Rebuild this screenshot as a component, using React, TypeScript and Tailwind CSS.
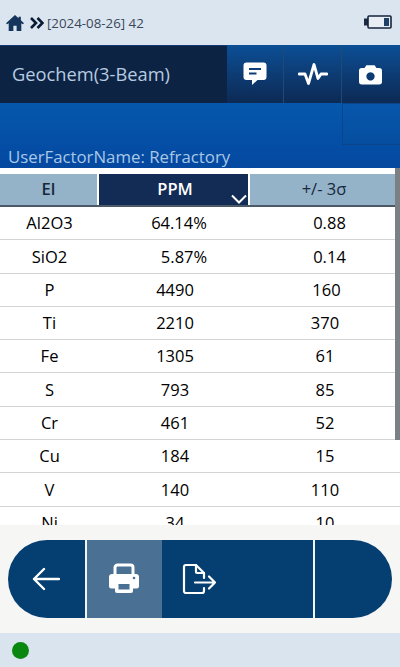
import React from "react";

const rows: [string, string, string, string, string][] = [
  ["Al2O3", "64.14%", "0.88", "pl-[10px]", "pl-[10px]"],
  ["SiO2", "5.87%", "0.14", "pl-[20px]", "pl-[10px]"],
  ["P", "4490", "160", "pl-[2px]", "pl-[4px]"],
  ["Ti", "2210", "370", "pl-[2px]", "pl-[1px]"],
  ["Fe", "1305", "61", "pl-[2px]", "pl-[1px]"],
  ["S", "793", "85", "pl-[2px]", "pl-[1px]"],
  ["Cr", "461", "52", "pl-[2px]", "pl-[1px]"],
  ["Cu", "184", "15", "pl-[2px]", "pl-[1px]"],
  ["V", "140", "110", "pl-[2px]", "pl-[1px]"],
  ["Ni", "34", "10", "pl-[2px]", "pl-[1px]"],
];

export default function App() {
  return (
    <div className="w-[400px] h-[667px] flex flex-col overflow-hidden bg-white text-black font-['Open_Sans','Noto_Sans',sans-serif]">
      {/* top status */}
      <div className="h-[45px] shrink-0 bg-[#dbe5ef] flex items-center pl-[6px] pr-[8px] pt-[1px]">
        <svg width="18" height="18" viewBox="0 0 20 20" className="text-[#14345c]" fill="currentColor">
          <path d="M10 1 0 10.200l1.200 1.300L3 10.300V19h5.200v-6h3.600v6H17V10.300l1.800 1.200 1.200-1.300L16.500 7V3h-2.500v1.800z" />
        </svg>
        <svg width="14" height="12" viewBox="0 0 14 12" fill="none" stroke="#0a1c34" strokeWidth="2.600" className="ml-[6px]">
          <path d="M1 1l5 5-5 5M7.500 1l5 5-5 5" />
        </svg>
        <span className="ml-[3px] text-[13.300px] leading-none text-[#39475a] mt-[1px]">[2024-08-26] 42</span>
        <svg width="28" height="14" viewBox="0 0 28 14" className="ml-auto -mt-[3px]">
          <rect x="0" y="3.500" width="4" height="7" fill="#1a2a40" />
          <rect x="4" y="1" width="23" height="12" rx="1" fill="#e8eef4" stroke="#14243c" strokeWidth="1.600" />
          <rect x="20" y="3" width="5" height="8" fill="#1f3f66" />
        </svg>
      </div>

      {/* title row */}
      <div className="h-[58px] shrink-0 flex">
        <div className="w-[227px] bg-[#0d2344] border-t border-[#123a6e] flex items-center pl-[12px] pb-[1px] text-[18.300px] text-[#b7cce0]">
          Geochem(3-Beam)
        </div>
        <div className="flex-1 flex bg-gradient-to-b from-[#0a4f96] to-[#0c2a54]">
          <div className="w-[57px] border-r border-[#1f4a76] flex items-center justify-center">
            <svg width="24" height="24" viewBox="0 0 24 24" fill="#fff">
              <path fillRule="evenodd" d="M3.500 0.500h17A3 3 0 0 1 23.500 3.500v11.500a3 3 0 0 1-3 3H14.500l-5.500 5v-5H3.500a3 3 0 0 1-3-3V3.500a3 3 0 0 1 3-3zM6 6v2h12V6zM6 10.500v2h7.500v-2z" />
            </svg>
          </div>
          <div className="w-[58px] border-r border-[#1f4a76] flex items-center justify-center">
            <svg width="30" height="24" viewBox="0 0 30 24" fill="none" stroke="#fff" strokeWidth="2.800" strokeLinejoin="round" strokeLinecap="round">
              <path d="M1 12h6l3.500 9.500L16 2.500l4 14 3-4.500h6" />
            </svg>
          </div>
          <div className="flex-1 flex items-center justify-center pr-[1px]">
            <svg width="23" height="21" viewBox="0 0 25 22" fill="#fff">
              <path fillRule="evenodd" d="M8 1h9l2 3h3a3 3 0 0 1 3 3v12a3 3 0 0 1-3 3H3a3 3 0 0 1-3-3V7a3 3 0 0 1 3-3h3zM12.500 8.500a4.500 4.500 0 1 0 0.010 0z" />
            </svg>
          </div>
        </div>
      </div>

      {/* blue panel */}
      <div className="relative h-[65px] shrink-0 bg-gradient-to-b from-[#0558ad] to-[#0548a0] flex items-end pl-[8px]">
        <span className="text-[16.800px] leading-[22px] text-[#a9c8e6]">UserFactorName: Refractory</span>
        <div className="absolute right-0 top-0 w-[58px] h-[42px] border-l border-b border-t border-[#0a4489] bg-gradient-to-b from-[#0757ac] to-[#064e9f]" />
      </div>

      {/* table */}
      <div className="relative h-[357px] shrink-0 bg-white overflow-hidden pt-[6px]">
        <div className="flex h-[33px] bg-[#94b3c9] border-b-2 border-[#4b5a66] text-[16.500px] font-semibold">
          <div className="w-[99px] flex items-center justify-center text-[#17283c] border-r-2 border-white">El</div>
          <div className="relative w-[151px] flex items-center justify-center pl-[3px] bg-[#122c56] text-white border-r-2 border-white">
            PPM
            <svg width="16" height="10" viewBox="0 0 16 10" fill="none" stroke="#fff" strokeWidth="2" className="absolute right-[1px] bottom-[1px]">
              <path d="M1 1.500l7 7 7-7" />
            </svg>
          </div>
          <div className="flex-1 flex items-center justify-center text-[#17283c] pl-[2px] pr-[4px] font-medium">+/- 3σ</div>
        </div>
        {rows.map((r) => (
          <div key={r[0]} className="flex h-[33.300px] items-center pt-[1px] border-b border-[#d2d4d6] text-[16.500px] font-medium text-black">
            <div className="w-[99px] text-center">{r[0]}</div>
            <div className={`w-[150px] text-center ${r[3]}`}>{r[1]}</div>
            <div className={`flex-1 text-center ${r[4]}`}>{r[2]}</div>
          </div>
        ))}
        <div className="absolute right-0 top-0 w-[5px] h-[272px] bg-[#7a8084]" />
      </div>

      {/* toolbar */}
      <div className="h-[108px] shrink-0 bg-[#f6f6f5] flex items-center px-[8px]">
        <div className="w-[384px] h-[78px] rounded-full bg-[#053e70] overflow-hidden flex">
          <div className="w-[77px] flex items-center justify-center pr-[1px]">
            <svg width="28" height="24" viewBox="0 0 28 24" fill="none" stroke="#fff" strokeWidth="2.400" strokeLinecap="round" strokeLinejoin="round">
              <path d="M27 12H2M12 2L2 12l10 10" />
            </svg>
          </div>
          <div className="w-[2px] bg-[#f0f4f6]" />
          <div className="w-[75px] bg-[#4a7094] flex items-center justify-center pr-[2px]">
            <svg width="32" height="32" viewBox="0 0 32 32" fill="none">
              <path d="M7 12V4.500a2.500 2.500 0 0 1 2.500-2.500h13a2.500 2.500 0 0 1 2.500 2.500V12" stroke="#fff" strokeWidth="3" />
              <path fillRule="evenodd" fill="#fff" d="M4 11h24a3 3 0 0 1 3 3v9a2.500 2.500 0 0 1-2.500 2.500H25v2.500a2 2 0 0 1-2 2H9a2 2 0 0 1-2-2v-2.500H3.500A2.500 2.500 0 0 1 1 23v-9a3 3 0 0 1 3-3zM10.500 21v5.500h11V21z" />
              <circle cx="26" cy="15" r="1.300" fill="#4a7094" />
            </svg>
          </div>
          <div className="w-[151px] flex items-center pl-[20px]">
            <svg width="36" height="32" viewBox="0 0 36 32" fill="none" stroke="#fff" strokeWidth="2.200" strokeLinecap="round" strokeLinejoin="round">
              <path d="M22 25v3a2 2 0 0 1-2 2H4a2 2 0 0 1-2-2V4a2 2 0 0 1 2-2h10l8 8v5" />
              <path d="M14 2v7a1 1 0 0 0 1 1h7" />
              <path d="M13 19.500h20M27 13.500l6 6-6 6" />
            </svg>
          </div>
          <div className="w-[2px] bg-[#f0f4f6]" />
          <div className="flex-1" />
        </div>
      </div>

      {/* bottom status */}
      <div className="flex-1 bg-[#d9e4ef] flex items-center pl-[12px] pt-[1px]">
        <div className="w-[17px] h-[17px] rounded-full bg-[#0a870f]" />
      </div>
    </div>
  );
}
